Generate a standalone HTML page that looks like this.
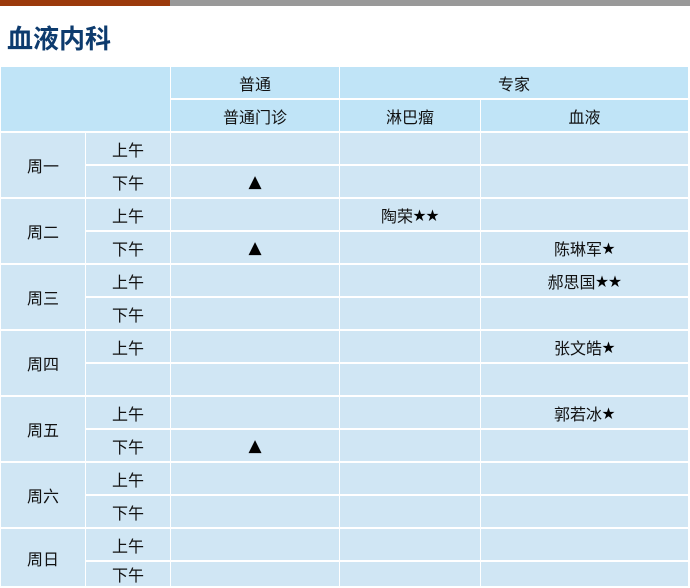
<!DOCTYPE html>
<html><head><meta charset="utf-8"><style>
body{margin:0;width:690px;height:588px;overflow:hidden;background:#fff;font-family:"Liberation Sans","Noto Sans CJK SC",sans-serif;}
.bar{position:absolute;top:0;left:0;height:6px;width:690px;background:#999;}
.bar i{position:absolute;left:0;top:0;height:6px;width:170px;background:#9b3a0c;}
h1{position:absolute;left:7px;top:20px;margin:0;font-size:26px;font-weight:bold;color:#0d3b6e;line-height:38px;}
.g{position:absolute;left:1px;top:67px;display:grid;grid-template-columns:84px 84px 168px 140px 207px;grid-template-rows:31px 31px repeat(13,31px) 24px;column-gap:1px;row-gap:2px;}
.g div{background:#d0e6f4;display:flex;align-items:center;justify-content:center;font-size:16px;color:#111;}
.g .h{background:#c0e4f7;}
s{text-decoration:none;font-size:13px;color:#000;}
b{font-weight:normal;font-size:17px;color:#000;font-family:"DejaVu Sans",sans-serif;}
</style></head><body>
<div class="bar"><i></i></div>
<h1>血液内科</h1>
<div class="g">
<div class="h" style="grid-column:1/3;grid-row:1/3"></div>
<div class="h" style="grid-column:3;grid-row:1">普通</div>
<div class="h" style="grid-column:4/6;grid-row:1">专家</div>
<div class="h" style="grid-column:3;grid-row:2">普通门诊</div>
<div class="h" style="grid-column:4;grid-row:2">淋巴瘤</div>
<div class="h" style="grid-column:5;grid-row:2">血液</div>

<div style="grid-row:3/5;grid-column:1">周一</div>
<div>上午</div><div></div><div></div><div></div>
<div>下午</div><div><b>▲</b></div><div></div><div></div>

<div style="grid-row:5/7;grid-column:1">周二</div>
<div>上午</div><div></div><div>陶荣<s>★★</s></div><div></div>
<div>下午</div><div><b>▲</b></div><div></div><div>陈琳军<s>★</s></div>

<div style="grid-row:7/9;grid-column:1">周三</div>
<div>上午</div><div></div><div></div><div>郝思国<s>★★</s></div>
<div>下午</div><div></div><div></div><div></div>

<div style="grid-row:9/11;grid-column:1">周四</div>
<div>上午</div><div></div><div></div><div>张文皓<s>★</s></div>
<div></div><div></div><div></div><div></div>

<div style="grid-row:11/13;grid-column:1">周五</div>
<div>上午</div><div></div><div></div><div>郭若冰<s>★</s></div>
<div>下午</div><div><b>▲</b></div><div></div><div></div>

<div style="grid-row:13/15;grid-column:1">周六</div>
<div>上午</div><div></div><div></div><div></div>
<div>下午</div><div></div><div></div><div></div>

<div style="grid-row:15/17;grid-column:1">周日</div>
<div>上午</div><div></div><div></div><div></div>
<div>下午</div><div></div><div></div><div></div>
</div>
</body></html>
